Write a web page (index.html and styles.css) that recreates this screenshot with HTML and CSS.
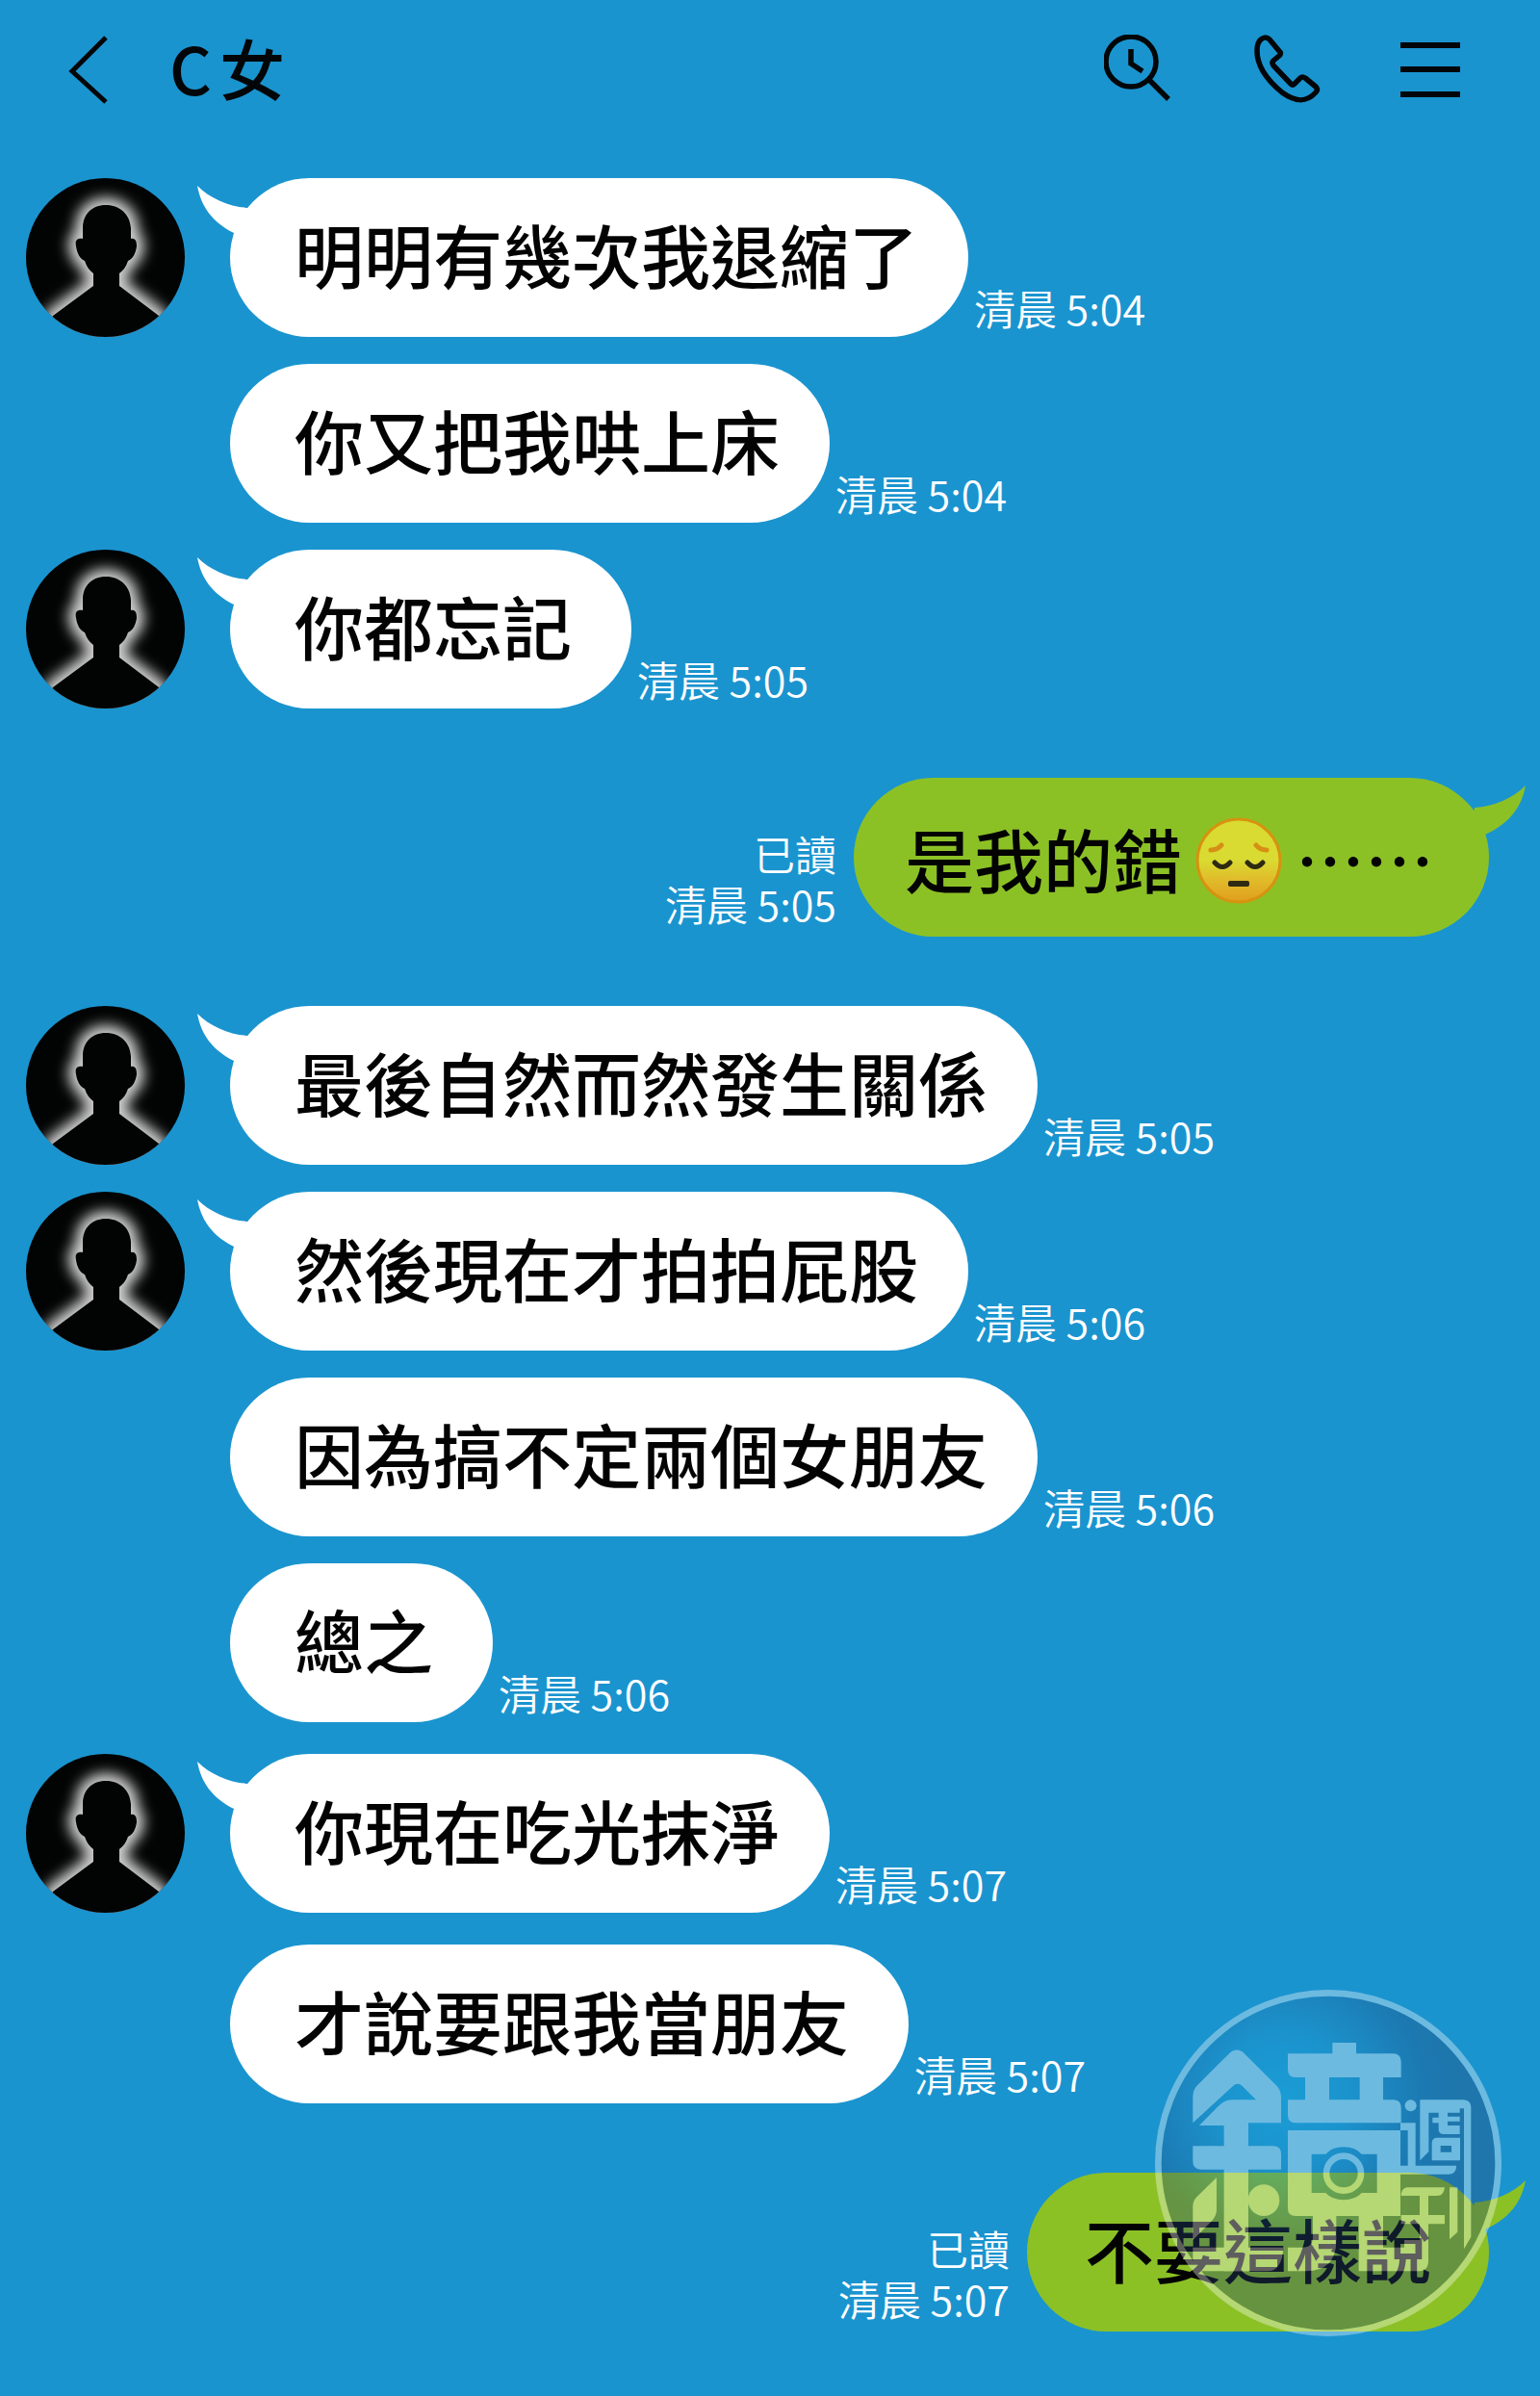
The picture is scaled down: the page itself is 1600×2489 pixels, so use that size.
FILE: index.html
```html
<!DOCTYPE html>
<html lang="zh-Hant">
<head>
<meta charset="utf-8">
<meta name="viewport" content="width=device-width, initial-scale=1">
<title>C女</title>
<link rel="stylesheet" href="styles.css">
</head>
<body>
<svg class="defs" aria-hidden="true">
  <defs>
    <filter id="glow" x="-40%" y="-40%" width="180%" height="180%">
      <feGaussianBlur stdDeviation="7"/>
    </filter>
    <clipPath id="disc"><circle cx="82.500" cy="82.500" r="82.500"/></clipPath>
    <symbol id="person" viewBox="0 0 165 165">
      <circle cx="82.500" cy="82.500" r="82.500" fill="#020303"/>
      <g clip-path="url(#disc)">
        <path d="M83 28C68 28 59 38 59 52V63C52 62 51 66 52 71C53 78 56 84 61 86C63 92 66 96 70 99V112L28 143L10 180H156L138 143L97 112V99C101 96 104 92 106 86C111 84 114 78 115 71C115 66 114 62 109 63V52C108 38 98 28 83 28Z" fill="#d0d0d0" stroke="#d0d0d0" stroke-width="16" filter="url(#glow)"/>
        <path d="M83 28C68 28 59 38 59 52V63C52 62 51 66 52 71C53 78 56 84 61 86C63 92 66 96 70 99V112L28 143L10 180H156L138 143L97 112V99C101 96 104 92 106 86C111 84 114 78 115 71C115 66 114 62 109 63V52C108 38 98 28 83 28Z" fill="#020303"/>
      </g>
    </symbol>
    <symbol id="tail" viewBox="0 0 60 60">
      <path d="M0 0C13 13 33 22 53 23L60 60L38 49C16 38 4 22 0 0Z" fill="currentColor"/>
    </symbol>
  </defs>
</svg>

<header class="topbar">
  <button class="icon-button" aria-label="返回">
    <svg width="42" height="72" viewBox="0 0 42 72" fill="none" stroke="#030608" stroke-width="5"><path d="M39 3L4 38L39 70"/></svg>
  </button>
  <h1 class="title"><span>C</span><span>女</span></h1>
  <nav class="actions">
    <button class="icon-button" aria-label="搜尋">
      <svg width="72" height="72" viewBox="0 0 72 72" fill="none" stroke="#030608" stroke-width="5.500"><circle cx="28" cy="28" r="26"/><path d="M28 15V30L40 38M47 47L67 67"/></svg>
    </button>
    <button class="icon-button" aria-label="通話">
      <svg width="72" height="72" viewBox="0 0 72 72" fill="none" stroke="#030608" stroke-width="5.500" stroke-linejoin="round"><path d="M18 5L28 17Q31 19 28 22L22 27Q20 29 22 32L40 51Q42 53 44 51L50 45Q52 43 55 45L66 54Q69 57 66 60C56 71 45 70 31 60C14 46 5 31 5 17Q5 8 9 5Q14 1 18 5Z"/></svg>
    </button>
    <button class="icon-button" aria-label="選單">
      <svg width="62" height="72" viewBox="0 0 62 72" fill="none" stroke="#030608" stroke-width="6"><path d="M0 11H62M0 36H62M0 62H62"/></svg>
    </button>
  </nav>
</header>

<main class="chat">
  <div class="message">
    <svg class="avatar"><use href="#person"/></svg>
    <p class="bubble"><svg class="tail"><use href="#tail"/></svg>明明有幾次我退縮了</p>
    <time class="stamp">清晨 5:04</time>
  </div>
  <div class="message">
    <p class="bubble">你又把我哄上床</p>
    <time class="stamp">清晨 5:04</time>
  </div>
  <div class="message">
    <svg class="avatar"><use href="#person"/></svg>
    <p class="bubble roomy"><svg class="tail"><use href="#tail"/></svg>你都忘記</p>
    <time class="stamp">清晨 5:05</time>
  </div>

  <div class="message mine">
    <div class="stamp"><span>已讀</span><time>清晨 5:05</time></div>
    <p class="bubble with-emoji"><svg class="tail"><use href="#tail"/></svg>是我的錯<svg class="emoji" viewBox="0 0 90 90" role="img" aria-label="沉思">
      <defs><linearGradient id="face" x1="0" y1="0" x2="0" y2="1"><stop offset="0.500" stop-color="#d9da32"/><stop offset="0.720" stop-color="#e0bd2b"/><stop offset="1" stop-color="#e19d1d"/></linearGradient></defs>
      <circle cx="45" cy="45" r="43" fill="url(#face)" stroke="#d6930f" stroke-width="3"/>
      <path d="M16 34Q23 34 27 29M74 34Q67 34 63 29" fill="none" stroke="#d68f14" stroke-width="5" stroke-linecap="round"/>
      <path d="M20 47Q28 56 36 47M54 47Q62 56 70 47" fill="none" stroke="#2e2a12" stroke-width="5" stroke-linecap="round"/>
      <rect x="34" y="66" width="22" height="6" rx="2" fill="#2e2a12"/>
    </svg>⋯⋯</p>
  </div>

  <div class="message switch">
    <svg class="avatar"><use href="#person"/></svg>
    <p class="bubble"><svg class="tail"><use href="#tail"/></svg>最後自然而然發生關係</p>
    <time class="stamp">清晨 5:05</time>
  </div>
  <div class="message">
    <svg class="avatar"><use href="#person"/></svg>
    <p class="bubble"><svg class="tail"><use href="#tail"/></svg>然後現在才拍拍屁股</p>
    <time class="stamp">清晨 5:06</time>
  </div>
  <div class="message">
    <p class="bubble">因為搞不定兩個女朋友</p>
    <time class="stamp">清晨 5:06</time>
  </div>
  <div class="message">
    <p class="bubble roomy">總之</p>
    <time class="stamp">清晨 5:06</time>
  </div>
  <div class="message later">
    <svg class="avatar"><use href="#person"/></svg>
    <p class="bubble"><svg class="tail"><use href="#tail"/></svg>你現在吃光抹淨</p>
    <time class="stamp">清晨 5:07</time>
  </div>
  <div class="message later">
    <p class="bubble roomy">才說要跟我當朋友</p>
    <time class="stamp">清晨 5:07</time>
  </div>

  <div class="message mine">
    <div class="stamp"><span>已讀</span><time>清晨 5:07</time></div>
    <p class="bubble"><svg class="tail"><use href="#tail"/></svg>不要這樣說</p>
  </div>

  <svg class="watermark" viewBox="120 80 1080 1080" role="img" aria-label="鏡週刊">
    <defs><radialGradient id="lens" gradientUnits="userSpaceOnUse" cx="520" cy="420" r="560"><stop offset="0" stop-color="#1cacdf"/><stop offset="0.350" stop-color="#1f94cc"/><stop offset="0.800" stop-color="#22487c"/><stop offset="1" stop-color="#264470"/></radialGradient></defs>
    <circle cx="660" cy="620" r="530" fill="url(#lens)" stroke="#fff" stroke-width="20"/>
    <g fill="#fff">
      <path d="M238 495V415Q238 392 252 378L350 280Q375 255 400 280L497 377Q513 393 513 415V495H411V567H488Q513 567 513 592V640H411V957H335V640H262Q238 640 238 615V567H335V503H258L318 442Q336 423 360 423H435L392 380Q378 366 363 380Z"/>
      <path d="M312 665V765Q312 785 298 799L238 860V755Q238 738 250 726Z"/>
      <circle cx="459" cy="736" r="49"/>
      <path d="M238 883H520Q516 957 470 957H262Q238 957 238 935V883Z"/>
      <path fill-rule="evenodd" d="M673 245H747V279H862Q887 279 887 305V353H831V423H862Q887 423 887 448V495H558Q534 495 534 470V423H588V353H558Q534 353 534 328V279H673ZM663 353V423H758V353Z"/>
      <path fill-rule="evenodd" d="M534 518H885V785H831V883H897V860H972V925Q972 957 940 957H755V785H685V860Q685 957 590 957H534V883H580Q612 883 612 850V785H558Q534 785 534 762ZM608 592V713H652Q672 735 708 735Q744 735 764 713H812V592H764Q744 570 708 570Q672 570 652 592Z"/>
      <circle cx="708" cy="652" r="54" fill="none" stroke="#fff" stroke-width="20"/>
      <circle cx="917" cy="441" r="18"/>
      <path d="M885 495H932V628H1059V635Q1055 655 1035 655H885V628H908V518H885Z"/>
      <path fill-rule="evenodd" d="M946 423H1080Q1105 423 1105 448V850L1083 888V450H973V585L946 612ZM973 450H1070V530H1020Q1004 530 1004 515V495H985V478H1004V463H973ZM1032 463V475H1070V463ZM1032 490V503H1070V490ZM1000 541H1071V612H983V558Q983 541 1000 541ZM1010 566V586H1044V566Z"/>
      <path d="M905 696H1023Q1020 722 1000 722H972V782H1023V810H972V860H945V810H887V782H945V722H887Q887 700 905 696ZM1038 696H1063V835L1038 858Z"/>
    </g>
  </svg>
</main>
</body>
</html>
```
FILE: styles.css
```css
* {
  box-sizing: border-box;
}

body {
  margin: 0;
  min-height: 100vh;
  background: #1a94cf;
  color: #030608;
  font-family: "Noto Sans CJK TC", "Noto Sans", sans-serif;
}

.defs {
  position: absolute;
  width: 0;
  height: 0;
}

.topbar {
  display: flex;
  align-items: center;
  height: 144px;
  padding: 0 83px 0 71px;
}

.icon-button {
  display: flex;
  padding: 0;
  border: 0;
  background: none;
}

.title {
  display: flex;
  gap: 8px;
  margin: 0 0 0 63px;
  padding-bottom: 4px;
  font-size: 68px;
  line-height: 72px;
  font-weight: 500;
}

.actions {
  display: flex;
  gap: 82px;
  margin-left: auto;
}

.chat {
  position: relative;
  display: flex;
  flex-direction: column;
  gap: 28px;
  padding: 41px 53px 67px 239px;
}

.message {
  position: relative;
  display: flex;
  align-items: flex-end;
  gap: 6px;
}

.message.mine {
  justify-content: flex-end;
  gap: 18px;
}

.message.mine,
.message.switch {
  margin-top: 44px;
}

.message.later {
  margin-top: 5px;
}

.avatar {
  position: absolute;
  top: 0;
  left: -212px;
  width: 165px;
  height: 165px;
}

.bubble {
  position: relative;
  display: flex;
  align-items: center;
  height: 165px;
  margin: 0;
  padding: 0 52px 10px 67px;
  border-radius: 83px;
  background: #fff;
  color: #030303;
  font-size: 72px;
  line-height: 104px;
  font-weight: 500;
  white-space: nowrap;
}

.bubble.roomy {
  padding-right: 62px;
}

.mine .bubble {
  padding-right: 60px;
  padding-left: 60px;
  background: #8cc126;
}

.mine .bubble.with-emoji {
  padding: 0 57px 0 53px;
}

.tail {
  position: absolute;
  top: 8px;
  left: -34px;
  width: 60px;
  height: 60px;
  color: #fff;
}

.mine .tail {
  right: -38px;
  left: auto;
  color: #8cc126;
  transform: scaleX(-1);
}

.emoji {
  width: 90px;
  height: 90px;
  margin: 6px 14px 0;
}

.stamp {
  padding-bottom: 5px;
  color: #fff;
  font-size: 43px;
  line-height: 52px;
  font-weight: 350;
  white-space: nowrap;
}

.mine .stamp {
  display: flex;
  flex-direction: column;
  align-items: flex-end;
  padding-bottom: 9px;
}

.watermark {
  position: absolute;
  right: 40px;
  bottom: 62px;
  width: 360px;
  height: 360px;
  opacity: 0.36;
}
```
